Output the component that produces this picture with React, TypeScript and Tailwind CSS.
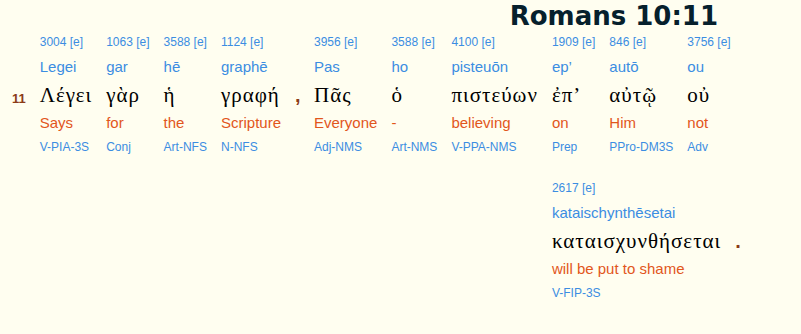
import React from "react";

type Word = {
  strongs: string;
  translit: string;
  greek: string;
  eng: string;
  parse: string;
  punct?: string;
};

const rowOne: Word[] = [
  { strongs: "3004", translit: "Legei", greek: "Λέγει", eng: "Says", parse: "V-PIA-3S" },
  { strongs: "1063", translit: "gar", greek: "γὰρ", eng: "for", parse: "Conj" },
  { strongs: "3588", translit: "hē", greek: "ἡ", eng: "the", parse: "Art-NFS" },
  { strongs: "1124", translit: "graphē", greek: "γραφή", eng: "Scripture", parse: "N-NFS", punct: "," },
  { strongs: "3956", translit: "Pas", greek: "Πᾶς", eng: "Everyone", parse: "Adj-NMS" },
  { strongs: "3588", translit: "ho", greek: "ὁ", eng: "-", parse: "Art-NMS" },
  { strongs: "4100", translit: "pisteuōn", greek: "πιστεύων", eng: "believing", parse: "V-PPA-NMS" },
];

const rowTwo: Word[] = [
  { strongs: "1909", translit: "ep’", greek: "ἐπ’", eng: "on", parse: "Prep" },
  { strongs: "846", translit: "autō", greek: "αὐτῷ", eng: "Him", parse: "PPro-DM3S" },
  { strongs: "3756", translit: "ou", greek: "οὐ", eng: "not", parse: "Adv" },
];

const last: Word = {
  strongs: "2617",
  translit: "kataischynthēsetai",
  greek: "καταισχυνθήσεται",
  eng: "will be put to shame",
  parse: "V-FIP-3S",
  punct: ".",
};

const sans = "font-['Liberation_Sans',Arial,sans-serif]";
const serif = "font-['Liberation_Serif','Times_New_Roman',serif]";

function WordCol({ w }: { w: Word }) {
  return (
    <>
      <div className="flex flex-col pr-[14px] whitespace-nowrap">
        <div className={`h-[22px] leading-[22px] text-[12px] text-[#3b8de2] ${sans}`}>
          {w.strongs} [e]
        </div>
        <div className={`h-[28px] leading-[28px] text-[15px] text-[#3b8de2] ${sans}`}>{w.translit}</div>
        <div className={`h-[28px] leading-[28px] text-[21px] tracking-[1px] text-black ${serif}`}>{w.greek}</div>
        <div className={`h-[27px] leading-[27px] text-[15px] text-[#e2561c] ${sans}`}>{w.eng}</div>
        <div className={`h-[23px] leading-[23px] text-[12px] text-[#3b8de2] ${sans}`}>{w.parse}</div>
      </div>
      {w.punct && (
        <div className="flex flex-col w-[19px]">
          <div className="h-[50px]" />
          <div className={`h-[28px] leading-[28px] text-[20px] font-bold text-[#8b3b17] ${sans}`}>
            {w.punct}
          </div>
        </div>
      )}
    </>
  );
}

export default function App() {
  return (
    <div className="w-[801px] h-[334px] bg-[#fffef0] overflow-hidden pt-[2px]">
      <div className="flex justify-end pr-[83px]">
        <h1 className="h-[29px] leading-[29px] text-[26px] font-bold text-[#06202c] font-['DejaVu_Sans',Verdana,sans-serif]">
          Romans 10:11
        </h1>
      </div>

      <div className="flex items-start pl-[12px]">
        {/* verse number */}
        <div className="flex flex-col pr-[14px]">
          <div className="h-[50px]" />
          <div className="h-[28px] leading-[28px] text-[21px]">
            <span className={`text-[13px] font-bold text-[#8b3b17] ${sans}`}>11</span>
          </div>
        </div>

        {rowOne.map((w, i) => (
          <WordCol key={i} w={w} />
        ))}

        {/* words that wrap under the end of the line */}
        <div className="flex flex-col gap-[18px]">
          <div className="flex">
            {rowTwo.map((w, i) => (
              <WordCol key={i} w={w} />
            ))}
          </div>
          <div className="flex">
            <WordCol w={last} />
          </div>
        </div>
      </div>
    </div>
  );
}
